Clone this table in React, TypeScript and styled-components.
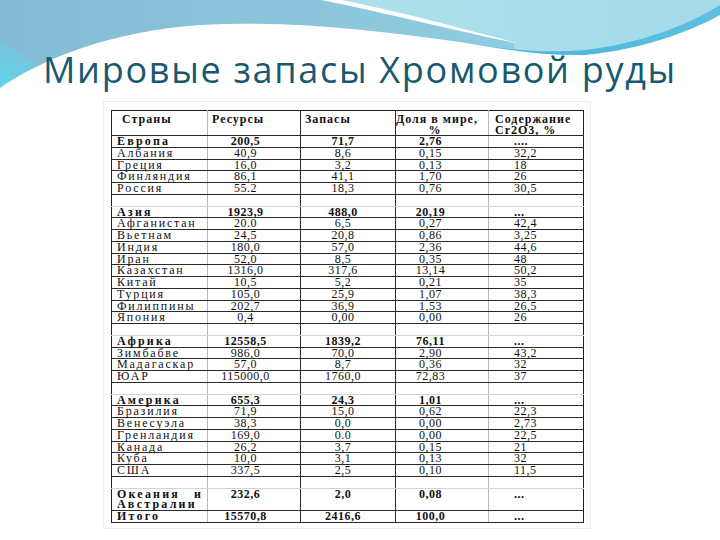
import styled, { createGlobalStyle } from 'styled-components';

type RowKind = 'group' | 'item' | 'blank' | 'total';

interface Row {
  kind: RowKind;
  cells: string[];
}

const item = (...cells: string[]): Row => ({ kind: 'item', cells });
const group = (...cells: string[]): Row => ({ kind: 'group', cells });
const blank: Row = { kind: 'blank', cells: ['', '', '', '', ''] };

const rows: Row[] = [
  group('Европа', '200,5', '71,7', '2,76', '....'),
  item('Албания', '40,9', '8,6', '0,15', '32,2'),
  item('Греция', '16,0', '3,2', '0,13', '18'),
  item('Финляндия', '86,1', '41,1', '1,70', '26'),
  item('Россия', '55.2', '18,3', '0,76', '30,5'),
  blank,
  group('Азия', '1923,9', '488,0', '20,19', '...'),
  item('Афганистан', '20.0', '6,5', '0,27', '42,4'),
  item('Вьетнам', '24,5', '20,8', '0,86', '3,25'),
  item('Индия', '180,0', '57,0', '2,36', '44,6'),
  item('Иран', '52,0', '8,5', '0,35', '48'),
  item('Казахстан', '1316,0', '317,6', '13,14', '50,2'),
  item('Китай', '10,5', '5,2', '0,21', '35'),
  item('Турция', '105,0', '25,9', '1,07', '38,3'),
  item('Филиппины', '202,7', '36,9', '1,53', '26,5'),
  item('Япония', '0,4', '0,00', '0,00', '26'),
  blank,
  group('Африка', '12558,5', '1839,2', '76,11', '...'),
  item('Зимбабве', '986,0', '70,0', '2,90', '43,2'),
  item('Мадагаскар', '57,0', '8,7', '0,36', '32'),
  item('ЮАР', '115000,0', '1760,0', '72,83', '37'),
  blank,
  group('Америка', '655,3', '24,3', '1,01', '...'),
  item('Бразилия', '71,9', '15,0', '0,62', '22,3'),
  item('Венесуэла', '38,3', '0,0', '0,00', '2,73'),
  item('Гренландия', '169,0', '0.0', '0,00', '22,5'),
  item('Канада', '26,2', '3,7', '0,15', '21'),
  item('Куба', '10,0', '3,1', '0,13', '32'),
  item('США', '337,5', '2,5', '0,10', '11,5'),
  blank,
  group('Океания и Австралии', '232,6', '2,0', '0,08', '...'),
  { kind: 'total', cells: ['Итого', '15570,8', '2416,6', '100,0', '...'] },
];

const GlobalStyle = createGlobalStyle`
  html, body {
    margin: 0;
    padding: 0;
    background: #ffffff;
  }
`;

const Wave = () => (
  <WaveSvg viewBox="0 0 720 100" preserveAspectRatio="none">
    <defs>
      <linearGradient id="steel" x1="0" y1="0" x2="1" y2="0">
        <stop offset="0" stopColor="#84bad5" />
        <stop offset="0.5" stopColor="#8cc4db" />
        <stop offset="1" stopColor="#8fcde0" />
      </linearGradient>
      <linearGradient id="sky" x1="0" y1="0" x2="1" y2="0">
        <stop offset="0" stopColor="#b6e4ee" />
        <stop offset="1" stopColor="#a4dbe8" />
      </linearGradient>
      <linearGradient id="band" x1="0" y1="0" x2="1" y2="0">
        <stop offset="0" stopColor="#7cc8e2" />
        <stop offset="0.35" stopColor="#4fb5dc" />
        <stop offset="1" stopColor="#5ec0e2" />
      </linearGradient>
      <radialGradient id="glow" cx="0" cy="95" r="80" gradientUnits="userSpaceOnUse">
        <stop offset="0" stopColor="#5fd6ea" stopOpacity="1" />
        <stop offset="1" stopColor="#5fd6ea" stopOpacity="0" />
      </radialGradient>
    </defs>
    <rect width="720" height="100" fill="url(#sky)" />
    <path d="M0,0 L320,0 C392,12 455,27 514,43 L514,70 L0,100 Z" fill="url(#steel)" />
    <path d="M0,40 L0,100 L90,100 Z" fill="url(#glow)" />
    <path d="M322,0 L342,0 C400,12 462,28 516,43 C456,31 395,15 322,0 Z" fill="#ffffff" />
    <path
      d="M440,38 C495,49 540,54 585,50 C640,44 690,24 720,5 L720,15 C690,32 640,50 585,55 C540,58 495,52 440,38 Z"
      fill="url(#band)"
    />
    <path
      d="M0,88 C40,60 110,31 200,25 C290,20 380,31 460,42 C505,50 545,56 585,55 C640,50 690,32 720,15 L720,100 L0,100 Z"
      fill="#ffffff"
    />
  </WaveSvg>
);

const App = () => {
  return (
    <>
      <GlobalStyle />
      <Slide>
        <Header>
          <Wave />
          <Title>Мировые запасы Хромовой руды</Title>
        </Header>
        <Frame>
          <Table>
            <colgroup>
              <col style={{ width: 96 }} />
              <col style={{ width: 93 }} />
              <col style={{ width: 95 }} />
              <col style={{ width: 93 }} />
              <col style={{ width: 95 }} />
            </colgroup>
            <thead>
              <tr>
                <HeadCell $col={0}>Страны</HeadCell>
                <HeadCell $col={1}>Ресурсы</HeadCell>
                <HeadCell $col={2}>Запасы</HeadCell>
                <HeadCell $col={3}>
                  Доля в мире,
                  <br />%
                </HeadCell>
                <HeadCell $col={4}>
                  Содержание
                  <br />
                  Cr2O3, %
                </HeadCell>
              </tr>
            </thead>
            <tbody>
              {rows.map((row, i) => (
                <tr key={i}>
                  {row.cells.map((text, c) => (
                    <Cell key={c} $col={c} $kind={row.kind}>
                      {text}
                    </Cell>
                  ))}
                </tr>
              ))}
            </tbody>
          </Table>
        </Frame>
      </Slide>
    </>
  );
};

const Slide = styled.div`
  width: 720px;
  height: 540px;
  overflow: hidden;
  background: #ffffff;
  display: flex;
  flex-direction: column;
`;

const Header = styled.header`
  position: relative;
  height: 101px;
  display: flex;
  justify-content: center;
`;

const WaveSvg = styled.svg`
  position: absolute;
  inset: 0;
  width: 720px;
  height: 100px;
`;

const Title = styled.h1`
  position: relative;
  margin: 0 0 0 0;
  padding-top: 45px;
  font-family: 'Open Sans', 'Noto Sans', sans-serif;
  font-size: 36px;
  font-weight: 400;
  letter-spacing: 1.7px;
  line-height: 49px;
  color: #17596e;
  white-space: nowrap;
`;

const Frame = styled.div`
  align-self: flex-start;
  margin-left: 103px;
  padding: 8px 6px 5px 7px;
  border: 1px solid #ededed;
`;

const Table = styled.table`
  width: 472px;
  table-layout: fixed;
  border-collapse: collapse;
  border: 1.5px solid #1e1e1e;
  font-family: 'Liberation Serif', 'Times New Roman', serif;
  font-size: 12px;
  color: #111111;
`;

const dividers = ['none', '1px solid #b8b8b8', '1px solid #2a2a2a', '1px solid #2a2a2a', '1px solid #b8b8b8'];

const headAlign = [
  'padding: 3px 0 0 10px; text-align: left;',
  'padding: 3px 0 0 4px; text-align: left;',
  'padding: 3px 0 0 4px; text-align: left;',
  'padding: 3px 14px 0 0; text-align: center;',
  'padding: 3px 0 0 6px; text-align: left;',
];

const cellAlign = [
  'padding: 0 4px 0 5px; text-align: justify;',
  'padding: 0 17px 0 0; text-align: center;',
  'padding: 0 10px 0 0; text-align: center;',
  'padding: 0 23px 0 0; text-align: center;',
  'padding: 0 0 0 25px; text-align: left;',
];

const isBold = (kind: RowKind) => kind === 'group' || kind === 'total';

const HeadCell = styled.th<{ $col: number }>`
  height: 24px;
  box-sizing: border-box;
  vertical-align: top;
  font-weight: 700;
  line-height: 10.5px;
  letter-spacing: 1px;
  white-space: nowrap;
  border-left: ${({ $col }) => dividers[$col]};
  border-bottom: 1px solid #2a2a2a;
  ${({ $col }) => headAlign[$col]}
`;

const Cell = styled.td<{ $col: number; $kind: RowKind }>`
  height: 10.75px;
  vertical-align: top;
  line-height: 10.75px;
  letter-spacing: ${({ $col, $kind }) => ($col === 0 ? (isBold($kind) ? '2.2px' : '1.8px') : '0.5px')};
  white-space: ${({ $col }) => ($col === 0 ? 'normal' : 'nowrap')};
  font-weight: ${({ $kind }) => (isBold($kind) ? 700 : 400)};
  border-left: ${({ $col }) => dividers[$col]};
  border-bottom: ${({ $kind }) => ($kind === 'blank' ? '1px solid #d4d4d4' : '1px solid #2a2a2a')};
  ${({ $col }) => cellAlign[$col]}
`;

export default App;
